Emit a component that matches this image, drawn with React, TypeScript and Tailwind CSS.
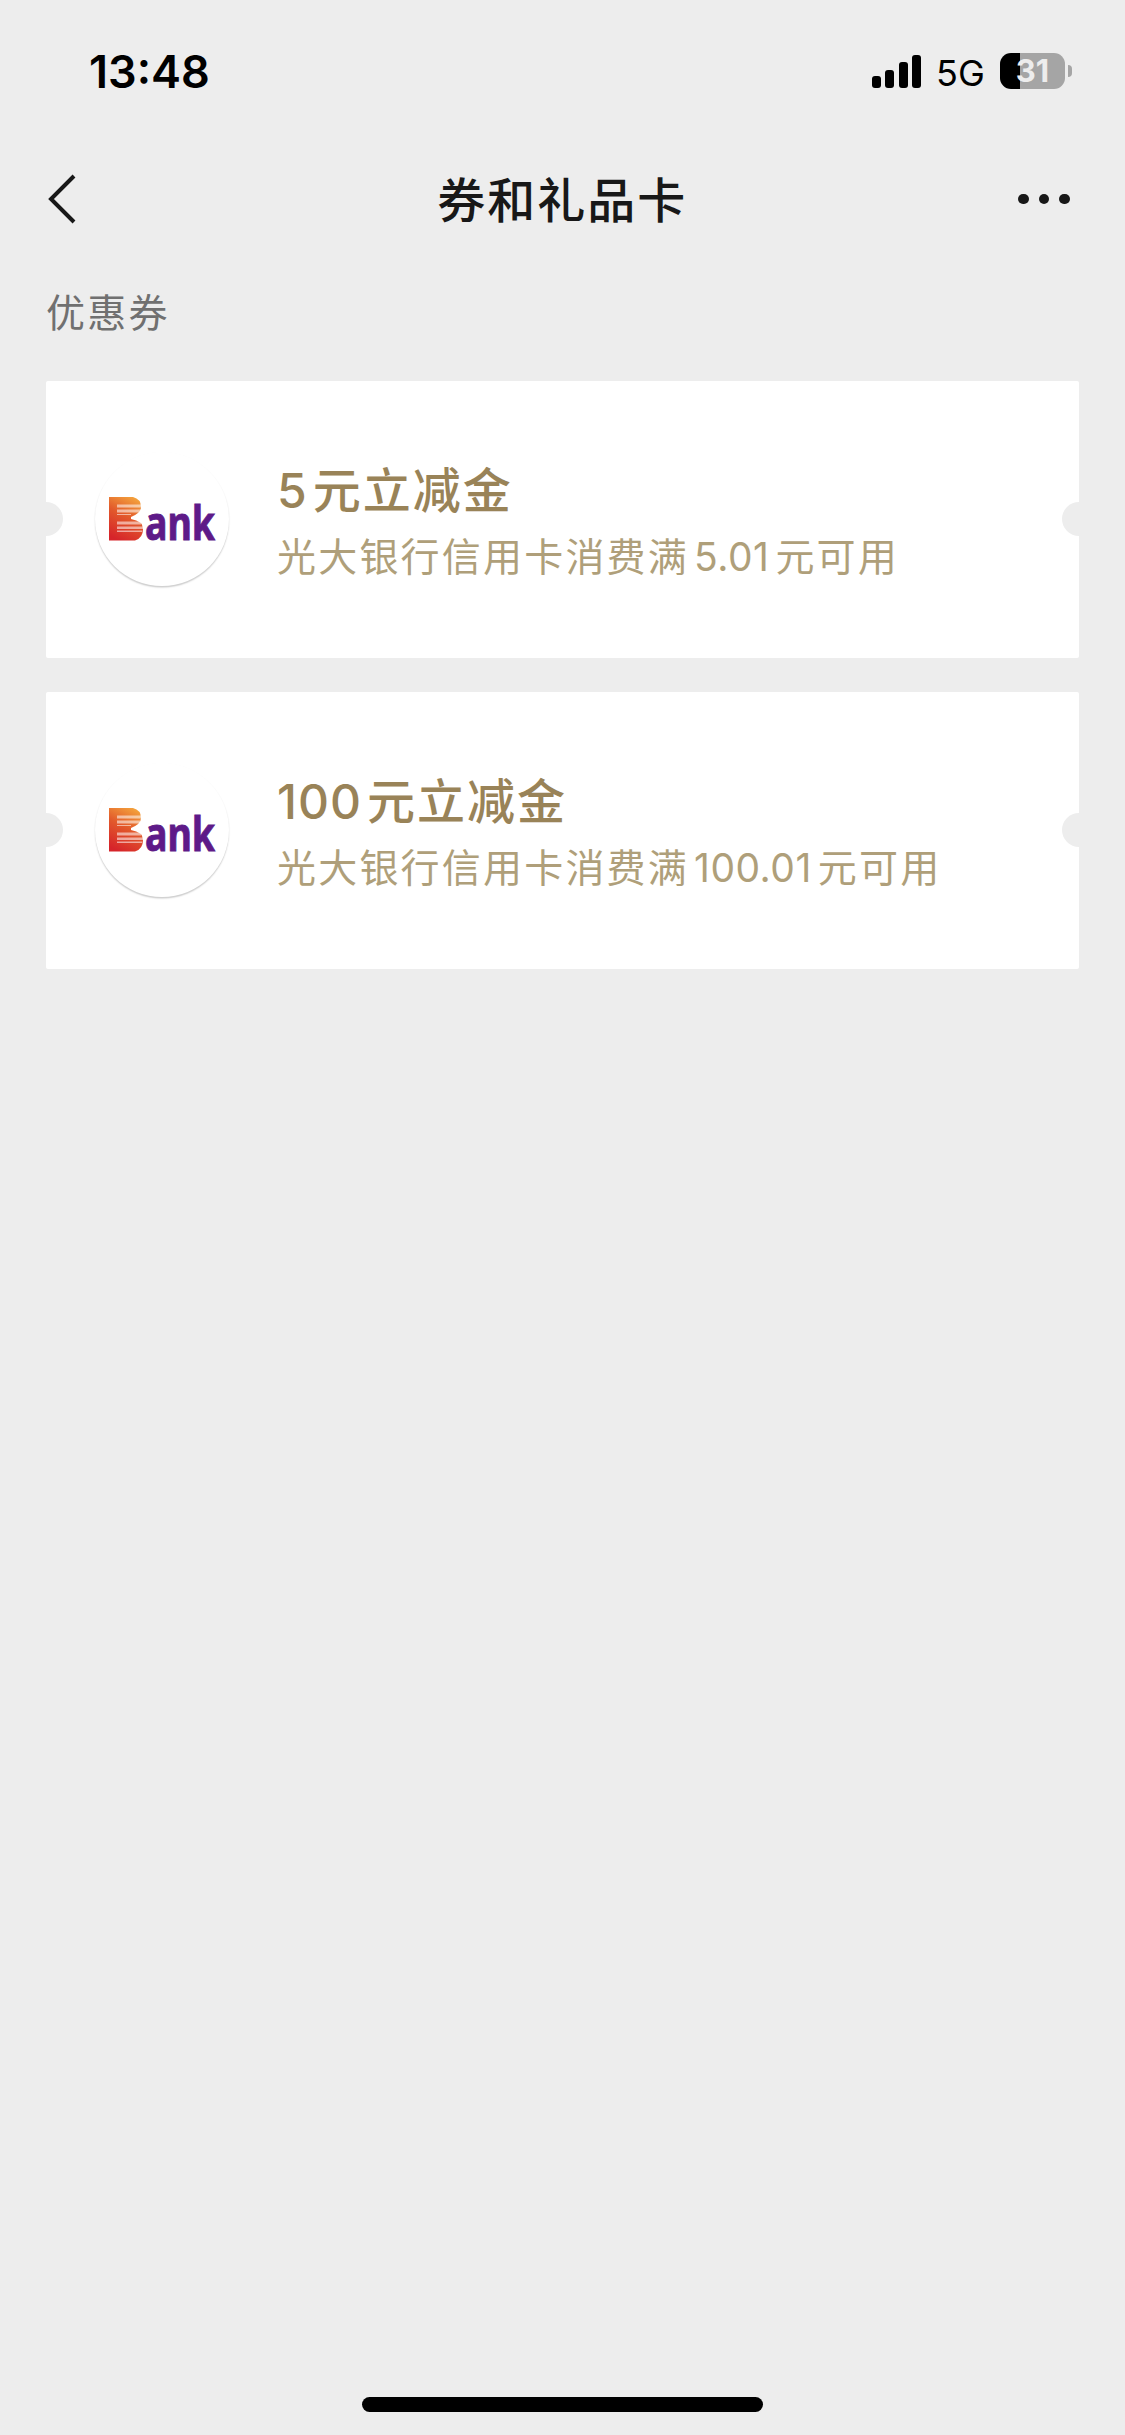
const coupons = [
  { id: 1, amount: '5', limit: '5.01' },
  { id: 2, amount: '100', limit: '100.01' },
];

const signalBars = ['h-3', 'h-[18px]', 'h-[26px]', 'h-[33px]'];

// Light stripes of the bank mark
const stripes = [
  { y: 9.5, w: 24, h: 3 },
  { y: 14.5, w: 23, h: 3 },
  { y: 19, w: 14, h: 1 },
  { y: 26.5, w: 24, h: 3 },
  { y: 31.5, w: 26, h: 2.5 },
  { y: 35.5, w: 25, h: 1.5 },
];

function StatusBar() {
  return (
    <div className="flex h-[142px] justify-between pr-[53px] pl-[89px] text-black">
      <div className="mt-[43px] text-[45px] leading-[58px] font-semibold">13:48</div>
      <div className="mt-[43px] flex h-[56px] items-center">
        <div className="flex h-[33px] items-end gap-[4.5px]">
          {signalBars.map((height) => (
            <div key={height} className={`w-[9px] rounded-[3px] bg-black ${height}`} />
          ))}
        </div>
        <div className="mt-[3px] ml-[15px] w-[64px] text-[36px] leading-[56px]">5G</div>
        <div className="flex h-9 w-[65px] items-center justify-center rounded-[11px] bg-[linear-gradient(90deg,#000_20px,#a5a5a5_20px)] text-[31px] leading-9 font-bold text-[#ededed]">
          31
        </div>
        <div className="ml-[3px] h-[12px] w-1 rounded-r-full bg-[#a5a5a5]" />
      </div>
    </div>
  );
}

function BankLogo() {
  return (
    <div className="mb-px flex h-[134px] w-[134px] items-center justify-center rounded-full bg-white shadow-[0_1.5px_1.5px_rgba(0,0,0,0.2)]">
      <svg width="114" height="72" viewBox="-2 -12 114 72" className="-mt-px overflow-visible">
        <defs>
          <linearGradient id="mark" x1="0.7" y1="0" x2="0.3" y2="1">
            <stop offset="0" stopColor="#f3a13c" />
            <stop offset="0.45" stopColor="#e2592b" />
            <stop offset="1" stopColor="#d6242a" />
          </linearGradient>
        </defs>
        <path
          d="M2 2H26Q34 4 34 12Q34 18 24 22V24Q36 26 36 34Q36 43 28 45.5H2Z"
          fill="url(#mark)"
        />
        {stripes.map((s) => (
          <rect key={s.y} x="10" y={s.y} width={s.w} height={s.h} fill="#fff" opacity="0.55" />
        ))}
        <text
          x="38"
          y="45"
          fontFamily="Noto Sans"
          fontWeight="700"
          fontSize="46"
          textLength="70"
          lengthAdjust="spacingAndGlyphs"
          fill="#5e1a88"
          stroke="#5e1a88"
          strokeWidth="0.9"
        >
          ank
        </text>
      </svg>
    </div>
  );
}

function CouponCard({ amount, limit }: { amount: string; limit: string }) {
  return (
    <div className="relative flex h-[277px] items-center rounded-[2px] bg-white pl-[49px]">
      <div className="absolute top-[121px] left-0 h-[34px] w-[17px] rounded-r-full bg-[#ededed]" />
      <div className="absolute top-[121px] right-0 h-[34px] w-[17px] rounded-l-full bg-[#ededed]" />
      <BankLogo />
      <div className="ml-[48px] pt-[7px] whitespace-nowrap">
        <div className="flex gap-[5px] text-[48px] leading-[66px] font-medium tracking-[2px] text-[#998358]">
          <span className="tracking-[1px]">{amount}</span>
          <span>元立减金</span>
        </div>
        <div className="flex text-[39px] leading-[65px] tracking-[2.2px] text-[#af9f7a]">
          <span>光大银行信用卡消费满</span>
          <span className="ml-[5px] tracking-[0.5px]">{limit}</span>
          <span className="ml-[6px]">元可用</span>
        </div>
      </div>
    </div>
  );
}

export default function App() {
  return (
    <div className="flex h-[2435px] w-[1125px] flex-col bg-[#ededed] font-['Inter','Noto_Sans_CJK_SC',sans-serif]">
      <StatusBar />

      {/* Nav bar */}
      <div className="flex h-[114px] items-center justify-between pr-[55px] pl-[46px]">
        <svg width="54" height="52" viewBox="0 0 54 52" fill="none" stroke="#181818" strokeWidth="4">
          <path d="M28 3L5 26L28 49" />
        </svg>
        <h1 className="pt-[3px] pl-[6px] text-[48px] font-medium tracking-[2px] text-[#181818]">券和礼品卡</h1>
        <div className="flex gap-[10px]">
          <span className="size-[10.5px] rounded-full bg-[#181818]" />
          <span className="size-[10.5px] rounded-full bg-[#181818]" />
          <span className="size-[10.5px] rounded-full bg-[#181818]" />
        </div>
      </div>

      <main className="flex-1 px-[46px]">
        <h2 className="h-[125px] pt-[28px] text-[39px] leading-[58px] tracking-[2.2px] text-[#707070]">优惠券</h2>
        <div className="flex flex-col gap-[34px]">
          {coupons.map((coupon) => (
            <CouponCard key={coupon.id} amount={coupon.amount} limit={coupon.limit} />
          ))}
        </div>
      </main>

      {/* Home indicator */}
      <div className="mx-auto mb-[23px] h-[15px] w-[401px] rounded-full bg-black" />
    </div>
  );
}
